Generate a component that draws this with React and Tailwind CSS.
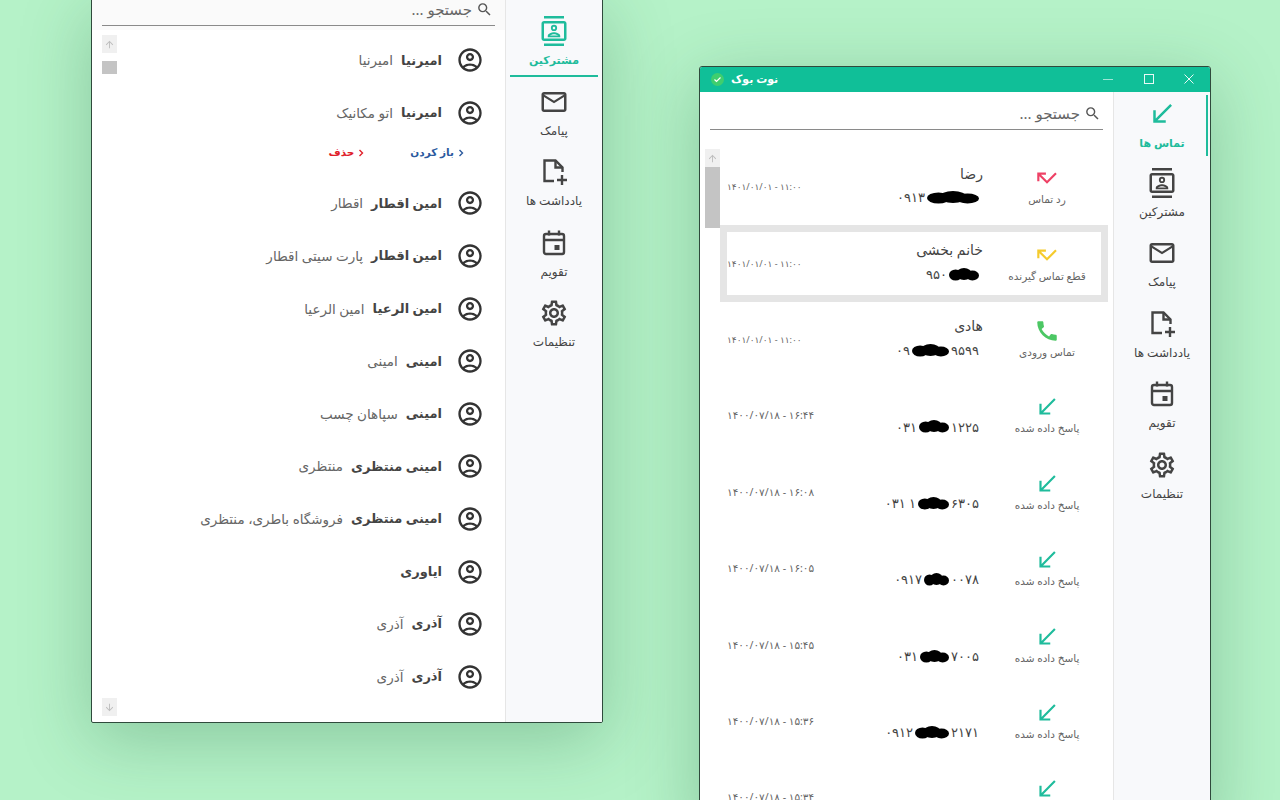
import {
  MdCall,
  MdCallMissed,
  MdCallReceived,
  MdOutlineAccountCircle,
  MdOutlineContacts,
  MdOutlineEmail,
  MdOutlineSettings,
  MdSearch,
  MdArrowUpward,
  MdArrowDownward,
} from "react-icons/md";

const font = "font-['Noto_Sans','DejaVu_Sans',sans-serif]";

const NoteIcon = ({ size = 30 }) => (
  <svg width={size} height={size} viewBox="0 0 30 30" fill="none" stroke="currentColor" strokeWidth="2.4">
    <path d="M15 24H5.5V3.5h11L23.5 10.5V15" />
    <path d="M16.5 3.5v7h7" />
    <path d="M23 18v10M18 23h10" />
  </svg>
);

const CalendarIcon = ({ size = 30 }) => (
  <svg width={size} height={size} viewBox="0 0 30 30" fill="none" stroke="currentColor" strokeWidth="2.4">
    <rect x="5" y="6" width="20" height="20" rx="2" />
    <path d="M5 12h20M10 2.500v5M20 2.500v5" />
    <rect x="15.500" y="17" width="5" height="5" fill="currentColor" stroke="none" />
  </svg>
);

const Chevron = () => (
  <svg width="6" height="8" viewBox="0 0 6 8" fill="none" stroke="currentColor" strokeWidth="1.4">
    <path d="M1.500 1l3 3-3 3" />
  </svg>
);

// the phone numbers are scribbled over in the picture
const Blob = ({ width }) => (
  <svg width={width} height="14" viewBox={`0 0 ${width} 14`} className="shrink-0">
    <ellipse cx={width * 0.22} cy="7" rx={width * 0.22} ry="5.500" />
    <ellipse cx={width * 0.5} cy="6" rx={width * 0.26} ry="6" />
    <ellipse cx={width * 0.78} cy="7.500" rx={width * 0.22} ry="5" />
  </svg>
);

const navItems = [
  { label: "تماس ها", Icon: MdCallReceived },
  { label: "مشترکین", Icon: MdOutlineContacts },
  { label: "پیامک", Icon: MdOutlineEmail },
  { label: "یادداشت ها", Icon: NoteIcon },
  { label: "تقویم", Icon: CalendarIcon },
  { label: "تنظیمات", Icon: MdOutlineSettings },
];

const contacts = [
  { name: "امیرنیا", sub: "امیرنیا" },
  { name: "امیرنیا", sub: "اتو مکانیک", actions: true },
  { name: "امین اقطار", sub: "اقطار" },
  { name: "امین اقطار", sub: "پارت سیتی اقطار" },
  { name: "امین الرعیا", sub: "امین الرعیا" },
  { name: "امینی", sub: "امینی" },
  { name: "امینی", sub: "سپاهان چسب" },
  { name: "امینی منتظری", sub: "منتظری" },
  { name: "امینی منتظری", sub: "فروشگاه باطری، منتظری" },
  { name: "ایاوری", sub: "" },
  { name: "آذری", sub: "آذری" },
  { name: "آذری", sub: "آذری" },
];

const answered = { label: "پاسخ داده شده", Icon: MdCallReceived, color: "text-[#1fbc9c]" };

const calls = [
  { status: { label: "رد تماس", Icon: MdCallMissed, color: "text-[#ee4266]" }, name: "رضا", left: "۰۹۱۳", blob: 52, right: "", date: "۱۴۰۱/۰۱/۰۱ - ۱۱:۰۰", short: true },
  { status: { label: "قطع تماس گیرنده", Icon: MdCallMissed, color: "text-[#f5cb2e]" }, name: "خانم بخشی", left: "۹۵۰", blob: 30, right: "", date: "۱۴۰۱/۰۱/۰۱ - ۱۱:۰۰", short: true, selected: true },
  { status: { label: "تماس ورودی", Icon: MdCall, color: "text-[#4cc764]" }, name: "هادی", left: "۰۹", blob: 37, right: "۹۵۹۹", date: "۱۴۰۱/۰۱/۰۱ - ۱۱:۰۰", short: true },
  { status: answered, left: "۰۳۱", blob: 30, right: "۱۲۲۵", date: "۱۴۰۰/۰۷/۱۸ - ۱۶:۴۴" },
  { status: answered, left: "۰۳۱ ۱", blob: 31, right: "۶۳۰۵", date: "۱۴۰۰/۰۷/۱۸ - ۱۶:۰۸" },
  { status: answered, left: "۰۹۱۷", blob: 25, right: "۰۰۷۸", date: "۱۴۰۰/۰۷/۱۸ - ۱۶:۰۵" },
  { status: answered, left: "۰۳۱", blob: 29, right: "۷۰۰۵", date: "۱۴۰۰/۰۷/۱۸ - ۱۵:۴۵" },
  { status: answered, left: "۰۹۱۲", blob: 34, right: "۲۱۷۱", date: "۱۴۰۰/۰۷/۱۸ - ۱۵:۳۶" },
  { status: answered, left: "", blob: 12, right: "", date: "۱۴۰۰/۰۷/۱۸ - ۱۵:۳۴" },
];

function Sidebar({ items, active, bar, className }) {
  return (
    <div className={`relative flex w-[97px] shrink-0 flex-col border-l border-[#e6e6e6] bg-[#f8f9fb] ${className}`}>
      {items.map(({ label, Icon }) => (
        <div
          key={label}
          className={`relative flex h-[70.6px] shrink-0 flex-col items-center justify-start ${
            label === active ? "text-[#1fbc9c]" : "text-[#444]"
          }`}
        >
          <Icon size={30} className={label === active && bar === "side" ? "mt-[2px]" : ""} />
          <span className={`mt-[3px] leading-[22px] ${label === active ? "text-[11px] font-bold" : "text-[12px] font-normal"}`}>
            {label}
          </span>
          {label === active && bar === "side" && (
            <span className="absolute right-[2px] top-[-2px] h-[61px] w-[2px] bg-[#1fbc9c]" />
          )}
          {label === active && bar === "bottom" && (
            <span className="absolute bottom-[10px] left-[4px] h-[2px] w-[88px] bg-[#1fbc9c]" />
          )}
        </div>
      ))}
    </div>
  );
}

function SearchBox({ className }) {
  return (
    <div className={`flex items-center justify-end gap-[4px] border-b border-[#8a8a8a] pr-[2px] text-[#666] ${className}`}>
      <span dir="rtl" className="text-[15px] leading-none">جستجو ...</span>
      <MdSearch size={17} className="text-[#555]" />
    </div>
  );
}

function ScrollBar({ thumbTop, thumbHeight }) {
  return (
    <div className="relative flex w-[15px] shrink-0 flex-col justify-between">
      <div className="flex h-[18px] items-center justify-center bg-[#f0f0f0] text-[#bdbdbd]">
        <MdArrowUpward size={11} />
      </div>
      <div className="absolute left-0 w-[15px] bg-[#c4c4c4]" style={{ top: thumbTop, height: thumbHeight }} />
      <div className="flex h-[18px] items-center justify-center bg-[#f0f0f0] text-[#bdbdbd]">
        <MdArrowDownward size={11} />
      </div>
    </div>
  );
}

function ContactRow({ contact }) {
  return (
    <>
      <div dir="rtl" className="flex h-[52.6px] items-center pr-[23px]">
        <MdOutlineAccountCircle size={28} className="-mx-[2px] shrink-0 text-[#333]" />
        <span className="mr-[16px] text-[13px] font-bold text-[#444]">{contact.name}</span>
        {contact.sub && <span className="mr-[8px] text-[13.5px] text-[#666]">{contact.sub}</span>}
      </div>
      {contact.actions && (
        <div dir="rtl" className="flex h-[38px] items-start gap-[46px] pr-[41px] pt-[6px] text-[10.5px] font-bold">
          <span className="flex items-center gap-[4px] text-[#2b5a9e]">
            <Chevron />
            باز کردن
          </span>
          <span className="flex items-center gap-[4px] text-[#e0202a]">
            <Chevron />
            حذف
          </span>
        </div>
      )}
    </>
  );
}

function Phone({ left, blob, right }) {
  return (
    <div dir="ltr" className="flex h-[25px] items-center justify-end gap-[2px] pr-[4px] text-[13px] text-[#444]">
      {left && <span>{left}</span>}
      <Blob width={blob} />
      {right && <span>{right}</span>}
    </div>
  );
}

function CallRow({ call }) {
  const { Icon, label, color } = call.status;
  return (
    <div
      className={`flex h-[76.4px] shrink-0 items-center border-[7px] ${
        call.selected ? "border-[#e5e5e5]" : "border-transparent"
      }`}
    >
      <span dir="ltr" className={`w-[120px] shrink-0 text-[#666] ${call.short ? "text-[9px]" : "text-[10.5px]"}`}>
        {call.date}
      </span>
      <div className="mb-[3px] flex flex-1 flex-col items-end pr-[10px]">
        <div dir="rtl" className="h-[25px] text-[14px] font-medium leading-[25px] text-[#444]">
          {call.name}
        </div>
        <Phone left={call.left} blob={call.blob} right={call.right} />
      </div>
      <div className="flex w-[108px] shrink-0 flex-col items-center">
        <Icon size={26} className={`-my-px ${color}`} />
        <span dir="rtl" className="text-[10.5px] leading-[18px] text-[#666]">
          {label}
        </span>
      </div>
    </div>
  );
}

export default function App() {
  return (
    <div className={`relative h-screen w-full overflow-hidden bg-[#b5f2c8] ${font}`}>
      {/* Contacts window */}
      <div className="absolute left-[91px] top-[-1px] flex h-[724px] w-[512px] overflow-hidden rounded-b-[2px] border border-[#2f4a3c] bg-white shadow-[0_16px_70px_rgba(20,90,50,0.28)]">
        <div className="flex min-w-0 flex-1 flex-col">
          <div className="h-[30px] shrink-0 bg-[#fafafa] px-[10px]">
            <SearchBox className="h-[26px] border-b-[1.5px] pb-[6px]" />
          </div>
          <div className="flex min-h-0 flex-1 pt-[4px]">
            <div className="flex pb-[6px] pl-[10px] pt-[1px]">
              <ScrollBar thumbTop={26} thumbHeight={13} />
            </div>
            <div className="min-w-0 flex-1">
              {contacts.map((contact, i) => (
                <ContactRow key={i} contact={contact} />
              ))}
            </div>
          </div>
        </div>
        <Sidebar items={navItems.slice(1)} active="مشترکین" bar="bottom" className="pt-[16px]" />
      </div>

      {/* Calls window */}
      <div className="absolute left-[699px] top-[66px] flex h-[760px] w-[512px] flex-col overflow-hidden rounded-t-[3px] border border-[#2f4a3c] bg-white shadow-[0_16px_70px_rgba(20,90,50,0.28)]">
        <div className="flex h-[25px] shrink-0 items-center bg-[#10bf98] pb-px text-white">
          <div className="ml-[11px] flex h-[13px] w-[13px] items-center justify-center rounded-full bg-[#3fce6e]">
            <svg width="9" height="9" viewBox="0 0 9 9" fill="none" stroke="white" strokeWidth="1.2">
              <path d="M1.500 4.500l2 2 4-4" />
            </svg>
          </div>
          <span dir="rtl" className="ml-[7px] text-[11px] font-bold">نوت بوک</span>
          <div className="ml-auto flex items-center">
            <span className="mr-[31px] h-px w-[10px] bg-white/60" />
            <span className="mr-[30px] h-[10px] w-[10px] border border-white/90" />
            <svg width="10" height="10" viewBox="0 0 10 10" stroke="white" strokeOpacity="0.9" className="mr-[16px]">
              <path d="M0.500 0.500l9 9M9.500 0.500l-9 9" />
            </svg>
          </div>
        </div>
        <div className="flex min-h-0 flex-1">
          <div className="flex min-w-0 flex-1 flex-col">
            <div className="h-[57px] shrink-0 px-[10px] pt-[10px]">
              <SearchBox className="h-[28px] pb-[5px]" />
            </div>
            <div className="flex min-h-0 flex-1">
              <div className="flex pl-[5px]">
                <ScrollBar thumbTop={18} thumbHeight={61} />
              </div>
              <div className="flex min-w-0 flex-1 flex-col pr-[5px]">
                {calls.map((call, i) => (
                  <CallRow key={i} call={call} />
                ))}
              </div>
            </div>
          </div>
          <Sidebar items={navItems} active="تماس ها" bar="side" className="pt-[5px]" />
        </div>
      </div>
    </div>
  );
}
